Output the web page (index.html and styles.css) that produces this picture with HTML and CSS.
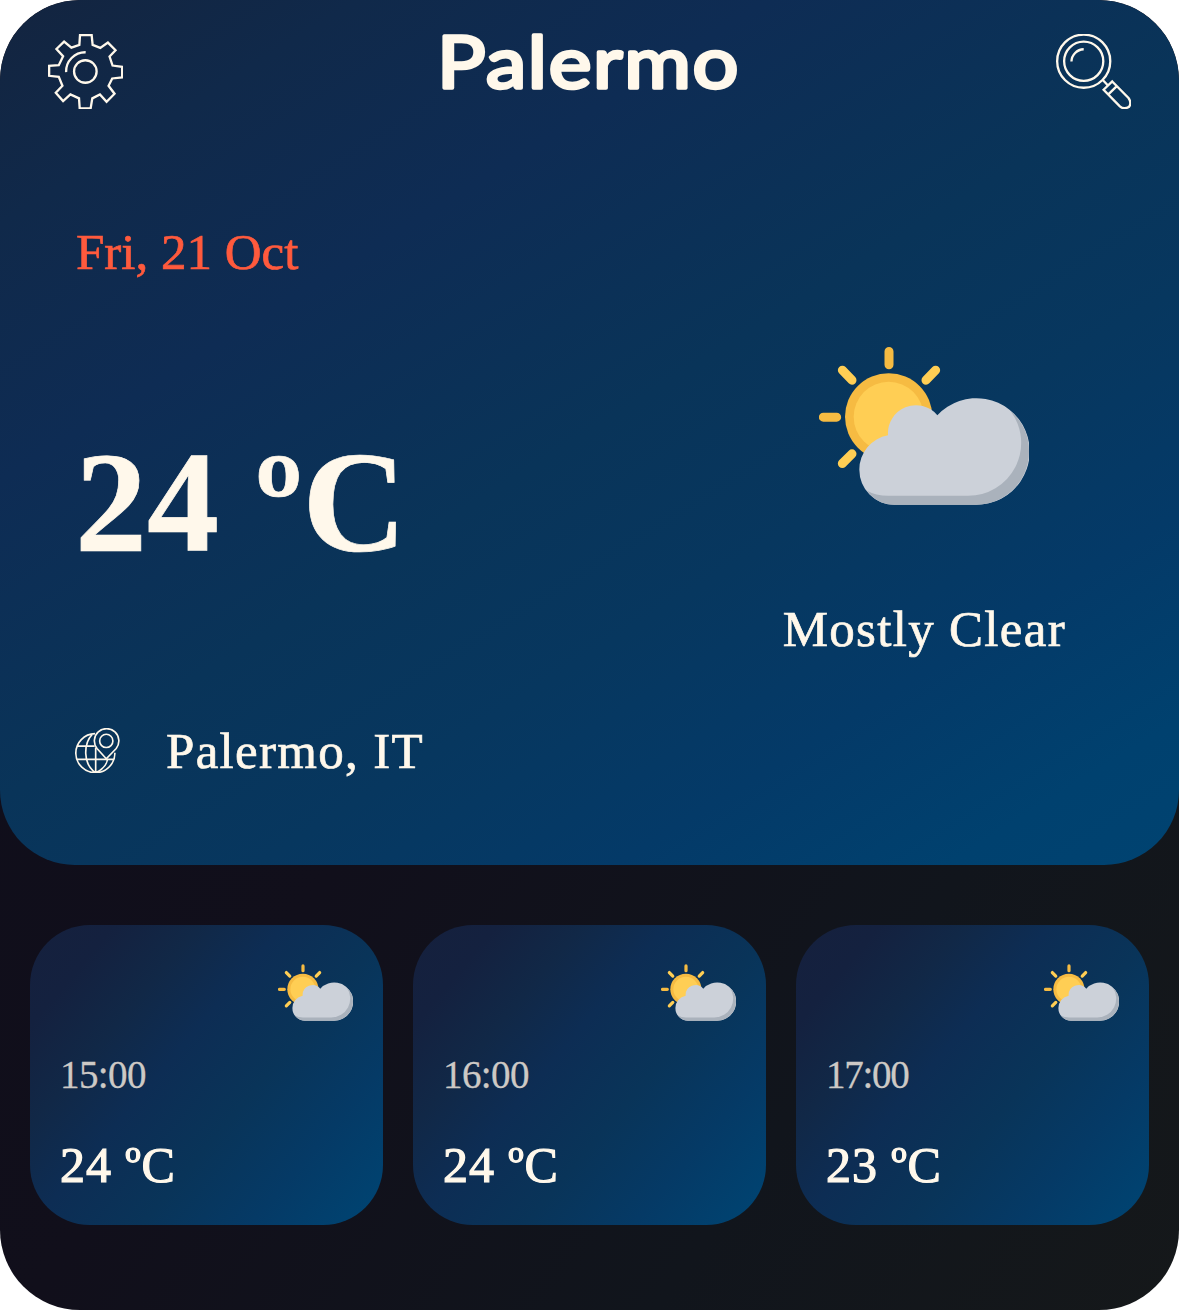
FILE: index.html
```html
<!DOCTYPE html>
<html lang="en">
<head>
<meta charset="utf-8">
<title>Palermo weather</title>
<link rel="stylesheet" href="styles.css">
</head>
<body>
<svg class="defs" width="0" height="0">
  <symbol id="partly" viewBox="57 52 630 473">
    <g stroke-width="27" stroke-linecap="round">
      <path stroke="#f6bb42" d="M267 65V105M70 262H110"/>
      <path stroke="#ffce54" d="M127 121L156 151M407 121L378 151M156 372L127 401"/>
    </g>
    <circle cx="266" cy="261" r="131" fill="#f6bb42"/>
    <circle cx="266" cy="261" r="105" fill="#ffce54"/>
    <path fill="#ccd1d9" d="M283 525A105 105 0 0 1 178 420A105 105 0 0 1 264 316A84 84 0 0 1 412 256A160 160 0 1 1 527 525Z"/>
    <path fill="#aab2bc" d="M632 244A160 160 0 0 1 687 365A160 160 0 0 1 527 525H283A105 105 0 0 1 200 482Q227 498 265 498H502A159 159 0 0 0 632 244Z"/>
  </symbol>
</svg>
<main class="app">
  <section class="hero">
    <header class="topbar">
      <svg class="tool" viewBox="54 41 225 226">
        <path d="M150 44H185L188 74L211 83L234 67L257 90L239 109L248 136L277 140V172L247 175L236 197L254 221L230 245L210 223L187 235L182 265H149L147 235L121 223L99 243L77 218L97 197L86 170L57 167V137L86 135L99 108L79 86L102 64L124 82L148 74Z"/>
        <circle cx="166" cy="154" r="34"/>
        <path d="M108 156A58 58 0 0 1 167 96"/>
      </svg>
      <h1 class="title"><svg class="title-text" viewBox="0 0 300 84"><text x="-3" y="66" textLength="303" lengthAdjust="spacingAndGlyphs">Palermo</text></svg></h1>
      <svg class="tool" viewBox="48 41 225 226">
        <circle cx="131" cy="123" r="80"/>
        <circle cx="131" cy="123" r="59"/>
        <path d="M94 124A38 38 0 0 1 131 87M187 178L202 194M217 184L266 234Q276 248 268 260Q252 270 240 259L191 209ZM230 199L206 222"/>
      </svg>
    </header>
    <div class="current">
      <div class="left">
        <div class="date">Fri, 21 Oct</div>
        <div class="temp">24 ºC</div>
        <div class="place">
          <svg class="globe" viewBox="45 38 135 136">
            <path d="M105 55A59 59 0 1 0 165 113M97 57C70 85 68 145 105 172M107 97V172M109 172C135 160 142 140 143 131M52 93H104M51 133H163"/>
            <path d="M139 131L111 100A37 37 0 1 1 169 100Z"/>
            <circle cx="139" cy="77" r="20"/>
          </svg>
          <span>Palermo, IT</span>
        </div>
      </div>
      <div class="right">
        <svg class="sky"><use href="#partly"/></svg>
        <div class="condition">Mostly Clear</div>
      </div>
    </div>
  </section>
  <section class="hours">
    <article class="card"><svg class="mini"><use href="#partly"/></svg><div class="hour">15:00</div><div class="degrees">24 ºC</div></article>
    <article class="card"><svg class="mini"><use href="#partly"/></svg><div class="hour">16:00</div><div class="degrees">24 ºC</div></article>
    <article class="card"><svg class="mini"><use href="#partly"/></svg><div class="hour tight">17:00</div><div class="degrees">23 ºC</div></article>
  </section>
</main>
</body>
</html>
```
FILE: styles.css
```css
* { box-sizing: border-box; }
body { margin: 0; background: #fff; color: #fff8eb; font-family: "Liberation Serif", serif; }
svg { display: block; }
.defs { height: 0; }
.app { width: 1179px; height: 1310px; border-radius: 80px; overflow: hidden; background: linear-gradient(125deg, #0e0d1b, #110f1b 45%, #11151c 75%, #15181a); }
.hero { height: 865px; border-radius: 80px 80px 75px 75px; background: linear-gradient(148deg, #13243f 0%, #10294a 14%, #0e2c54 30%, #093459 50%, #07375f 64%, #043a68 78%, #00416f 91%, #004371 100%); }
.topbar { display: flex; justify-content: space-between; padding: 34px 48px 0; height: 150px; }
.tool { width: 75px; height: 75px; fill: none; stroke: #fff8eb; stroke-width: 7; }
.title { margin: -12px 0 0; height: 84px; }
.title-text { width: 300px; height: 84px; overflow: visible; font: 400 72px/1 Lato, sans-serif; letter-spacing: 1.5px; fill: #fff8eb; stroke: #fff8eb; stroke-width: 3.5; stroke-linejoin: round; }
.current { display: flex; justify-content: space-between; padding: 0 113px 0 76px; font-size: 51px; line-height: 60px; white-space: nowrap; -webkit-text-stroke: 0.7px; }
.left { padding-top: 72px; }
.date { color: #ff5a3d; }
.temp { margin: 141px 0 0 -1px; font-size: 144px; font-weight: 700; line-height: 160px; }
.place { display: flex; align-items: center; gap: 46px; margin: 138px 0 0 -1px; letter-spacing: 1.3px; }
.globe { width: 45px; height: 45px; margin-top: -1px; fill: none; stroke: #fff8eb; stroke-width: 5; }
.right { display: flex; flex-direction: column; align-items: center; padding-top: 197px; }
.sky { width: 210px; height: 158px; }
.condition { margin-top: 94px; letter-spacing: 1.3px; }
.hours { display: grid; grid-template-columns: repeat(3, 353px); gap: 30px; padding: 60px 30px 0; }
.card { height: 300px; border-radius: 60px; padding: 39px 30px 0; background: linear-gradient(130deg, #15203d 0%, #14213f 14%, #112847 28%, #0d2d54 42%, #093459 60%, #053a66 78%, #004371 96%); }
.mini { width: 75px; height: 57px; margin-left: auto; }
.hour { margin-top: 32px; font-size: 39px; line-height: 44px; letter-spacing: -0.6px; color: #cdc9c5; -webkit-text-stroke: 0.3px; }
.hour.tight { letter-spacing: -1.3px; }
.degrees { margin-top: 38px; font-size: 50px; line-height: 60px; letter-spacing: 0.9px; -webkit-text-stroke: 1.2px; }
```
